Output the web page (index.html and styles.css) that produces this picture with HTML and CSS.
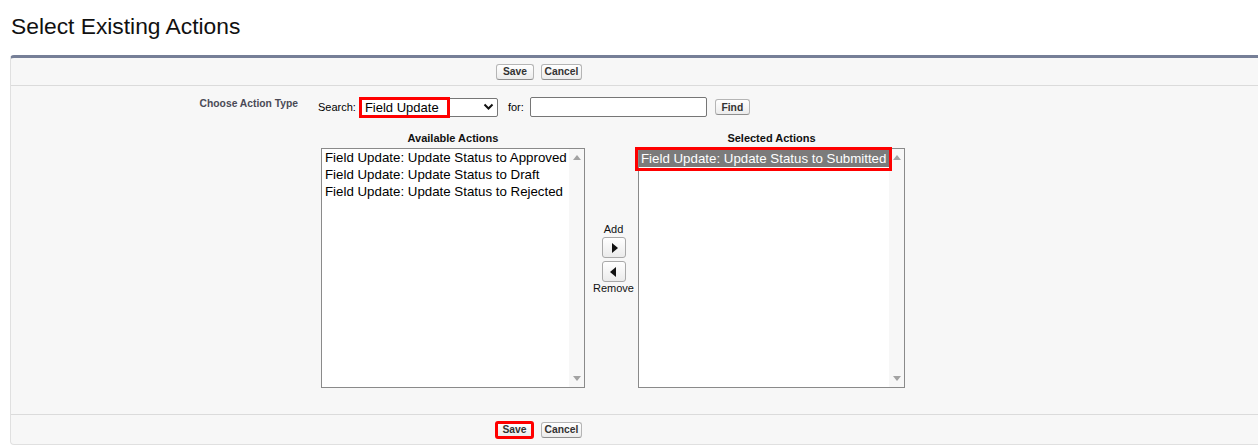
FILE: index.html
```
<!DOCTYPE html>
<html>
<head>
<meta charset="utf-8">
<title>Select Existing Actions</title>
<link rel="stylesheet" href="styles.css">
</head>
<body>
<h1 class="title">Select Existing Actions</h1>
<div class="panel">
  <div class="btnrow top">
    <button class="btn save">Save</button>
    <button class="btn cancel">Cancel</button>
  </div>
  <div class="pbody">
    <div class="label">Choose Action Type</div>
    <div class="data">
      <div class="search-row">
        <span class="lbl">Search:</span>
        <div class="select">
          <span class="select-text">Field Update</span>
          <svg class="chev" width="11" height="8" viewBox="0 0 11 8"><path d="M1.5 1.5 L5.5 5.5 L9.5 1.5" fill="none" stroke="#111" stroke-width="2"/></svg>
          <span class="hl-box select-hl"></span>
        </div>
        <span class="lbl for">for:</span>
        <div class="input"></div>
        <button class="btn find">Find</button>
      </div>
      <div class="duel">
        <div class="col left">
          <div class="colhead">Available Actions</div>
          <div class="listbox">
            <div class="items">
              <div class="opt">Field Update: Update Status to Approved</div>
              <div class="opt">Field Update: Update Status to Draft</div>
              <div class="opt">Field Update: Update Status to Rejected</div>
            </div>
            <div class="scroll"><span class="tri up"></span><span class="tri down"></span></div>
          </div>
        </div>
        <div class="mid">
          <div class="midlbl">Add</div>
          <button class="arrow add"><span class="tri-r"></span></button>
          <button class="arrow remove"><span class="tri-l"></span></button>
          <div class="midlbl">Remove</div>
        </div>
        <div class="col right">
          <div class="colhead">Selected Actions</div>
          <div class="listbox sel">
            <div class="items">
              <div class="opt selected">Field Update: Update Status to Submitted</div>
            </div>
            <div class="scroll"><span class="tri up"></span><span class="tri down"></span></div>
            <span class="hl-box opt-hl"></span>
          </div>
        </div>
      </div>
    </div>
  </div>
  <div class="btnrow bottom">
    <button class="btn save hl">Save</button>
    <button class="btn cancel">Cancel</button>
  </div>
</div>
</body>
</html>
```
FILE: styles.css
```
html, body {
  margin: 0;
  padding: 0;
  overflow: hidden;
  background: #ffffff;
  font-family: "Liberation Sans", Arial, sans-serif;
  color: #000;
}

.title {
  margin: 0;
  padding: 13px 0 0 11px;
  height: 42px;
  font-size: 22.8px;
  line-height: 26px;
  font-weight: normal;
  color: #111;
}

.panel {
  margin-left: 10px;
  width: 1270px;
  background: #f7f7f7;
  border-top: 3px solid #767f97;
  border-left: 1px solid #e0e0e0;
  border-bottom: 1px solid #e0e0e0;
  border-top-left-radius: 4px;
  border-bottom-left-radius: 4px;
}

.btnrow {
  display: flex;
  align-items: center;
  padding-left: 485px;
}
.btnrow.top {
  height: 27px;
  border-bottom: 1px solid #dbdbdb;
}
.btnrow.bottom {
  height: 29px;
  border-top: 1px solid #dbdbdb;
}

.btn {
  box-sizing: border-box;
  height: 16px;
  margin: 0;
  padding: 0;
  font-family: "Liberation Sans", Arial, sans-serif;
  font-size: 10.3px;
  font-weight: bold;
  color: #333;
  background: linear-gradient(#ffffff, #ececec);
  border: 1px solid #b5b5b5;
  border-bottom-color: #8f8f8f;
  border-radius: 3px;
  text-align: center;
  line-height: 13px;
}
.btn.save { width: 38px; }
.btn.cancel { width: 41px; margin-left: 7px; }
.btn.save.hl {
  width: 39px;
  height: 18px;
  margin-left: -1px;
  border: 3px solid #ff0000;
  line-height: 12px;
}
.btn.find { width: 35px; margin-left: 8px; }

.pbody {
  display: flex;
}
.label {
  width: 287px;
  padding-top: 11px;
  text-align: right;
  font-size: 10.3px;
  line-height: 13px;
  font-weight: bold;
  color: #4a4a56;
}
.data {
  margin-left: 20px;
  padding-bottom: 26px;
}

.search-row {
  display: flex;
  align-items: center;
  height: 20px;
  margin-top: 11px;
}
.lbl {
  font-size: 11px;
  color: #000;
}
.lbl.for { margin-left: 10px; }

.select {
  position: relative;
  box-sizing: border-box;
  width: 139px;
  height: 19px;
  margin-left: 3px;
  background: #fff;
  border: 1px solid #767676;
  border-radius: 2px;
  display: flex;
  align-items: center;
  justify-content: space-between;
  padding: 0 3px 0 5px;
}
.select-text {
  font-size: 13px;
  line-height: 15px;
}
.chev { display: block; }

.hl-box {
  position: absolute;
  box-sizing: border-box;
  border: 3px solid #ff0000;
  pointer-events: none;
}
.select-hl {
  left: -1px;
  top: -2px;
  width: 91px;
  height: 21px;
}

.input {
  box-sizing: border-box;
  width: 177px;
  height: 20px;
  margin-left: 6px;
  background: #fff;
  border: 1px solid #767676;
  border-radius: 2px;
}

.duel {
  display: flex;
  margin-top: 15px;
  margin-left: 3px;
}
.col { display: flex; flex-direction: column; }
.col.left { width: 264px; }
.col.right { width: 267px; }
.colhead {
  text-align: center;
  font-size: 11px;
  line-height: 13px;
  font-weight: bold;
  color: #111;
  margin-bottom: 3px;
}

.listbox {
  position: relative;
  box-sizing: border-box;
  height: 240px;
  background: #fff;
  border: 1px solid #8a8a8a;
  display: flex;
}
.items {
  flex: 1;
  padding-top: 0;
  min-width: 0;
}
.opt {
  height: 17px;
  padding-left: 3px;
  font-size: 13.3px;
  line-height: 17px;
  white-space: nowrap;
  overflow: hidden;
}
.opt.selected {
  margin-top: 1px;
  background: #7b7b7b;
  color: #fff;
  padding-left: 2px;
}
.opt-hl {
  left: -4px;
  top: -2px;
  width: 257px;
  height: 24px;
}

.scroll {
  width: 15px;
  background: #f7f7f7;
  display: flex;
  flex-direction: column;
  align-items: center;
  justify-content: space-between;
  padding: 6px 0 6px;
  box-sizing: border-box;
}
.tri {
  width: 0;
  height: 0;
  border-left: 4.5px solid transparent;
  border-right: 4.5px solid transparent;
}
.tri.up { border-bottom: 5px solid #a3a3a3; }
.tri.down { border-top: 5px solid #a3a3a3; }

.mid {
  box-sizing: border-box;
  width: 53px;
  display: flex;
  flex-direction: column;
  align-items: center;
  justify-content: center;
  padding-left: 4px;
  padding-bottom: 2px;
}
.midlbl {
  font-size: 11px;
  line-height: 13px;
  color: #111;
}
.arrow {
  box-sizing: border-box;
  width: 24px;
  height: 21px;
  margin: 1px 0 0;
  padding: 0;
  background: linear-gradient(#ffffff, #ebebeb);
  border: 1px solid #a9a9a9;
  border-radius: 3px;
  display: flex;
  align-items: center;
  justify-content: center;
}
.arrow.remove { margin-top: 3px; }
.tri-r {
  width: 0;
  height: 0;
  border-top: 5px solid transparent;
  border-bottom: 5px solid transparent;
  border-left: 6px solid #111;
  margin-left: 2px;
}
.tri-l {
  width: 0;
  height: 0;
  border-top: 5px solid transparent;
  border-bottom: 5px solid transparent;
  border-right: 6px solid #111;
  margin-right: 2px;
}
```
